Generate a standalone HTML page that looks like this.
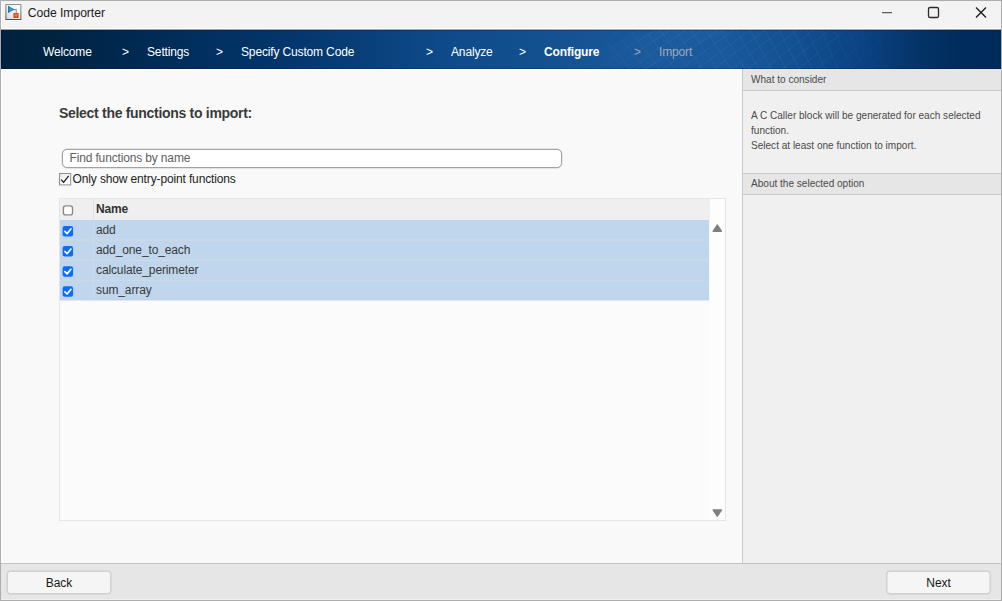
<!DOCTYPE html>
<html lang="en">
<head>
<meta charset="utf-8">
<title>Code Importer</title>
<style>
*{box-sizing:border-box;margin:0;padding:0}
html,body{width:1002px;height:601px;overflow:hidden;background:#fafafa}
body{font-family:"Liberation Sans",Arial,sans-serif;color:#333;position:relative}
body>*,.a{position:absolute}
.t{white-space:nowrap}
/* window frame */
#frame{left:0;top:0;width:1002px;height:601px;border:1px solid #adadad;pointer-events:none;z-index:9}
#title{left:1px;top:1px;width:1000px;height:28px;background:#f3f3f3;border-bottom:1px solid #fff;border-left:1px solid #fff}
#cap{left:27.7px;top:6px;font-size:12.2px;line-height:15px;color:#1b1b1b;letter-spacing:-0.05px}
#banner{left:1px;top:29px;width:1000px;height:40px;background:linear-gradient(90deg,#00223f 0%,#002340 5%,#00274b 10%,#012f5f 20%,#04376e 30%,#0f4b8a 45%,#145191 55%,#18589b 65%,#19599c 72%,#124f90 80%,#0a4080 87%,#043366 92%,#002c5c 96%,#002a5a 100%);overflow:hidden;box-shadow:inset 0 1px 0 rgba(255,255,255,.6),inset 0 2px 0 rgba(0,10,60,.28),inset 0 -1px 0 rgba(0,10,60,.25),inset 1px 0 0 rgba(0,0,30,.3)}
.nv{top:45px;font-size:12px;line-height:15px;color:#fff;letter-spacing:-0.15px}
.nv.b{font-weight:bold}
.nv.d{color:#a2a9b4}
#main{left:1px;top:69px;width:741px;height:495px;background:#f9f9f9;border-top:2px solid #fff;border-left:1px solid #fff}
#side{left:742px;top:69px;width:259px;height:495px;background:#f0f0f0;border-left:1px solid #c9c9c9}
.sh{left:743px;width:258px;background:#e6e6e6;border-bottom:1px solid #c9c9c9}
.st{font-size:10.05px;line-height:15px;color:#4a4a4a}
#foot{left:1px;top:563px;width:1000px;height:37px;background:#e6e6e6;border-top:1px solid #c2c2c2;border-bottom:1px solid #efefef}
.btn{top:571px;width:104px;height:23px;border:1px solid #d1d1d1;border-radius:3.5px;background:#f5f5f5;font-size:12px;line-height:22px;text-align:center;color:#161616;letter-spacing:-0.1px;box-shadow:0 0 0 0.7px #d4d4d4}
.row{left:60px;width:650px;height:20px;background:#c0d6ec;border-top:1px solid #d3e0ee}
.cbx{left:63px;width:10px;height:10px;border-radius:2.5px;background:#0d6efd}
.rt{left:96px;font-size:12px;line-height:15px;color:#3a3a3a;letter-spacing:-0.12px}
</style>
</head>
<body>
<div id="title"></div>
<svg style="left:0;top:0" width="28" height="26" viewBox="0 0 28 26">
  <defs>
    <linearGradient id="ig" x1="1" y1="0" x2="0" y2="1"><stop offset="0" stop-color="#ffffff"/><stop offset="0.5" stop-color="#f4f4f4"/><stop offset="1" stop-color="#d4d4d4"/></linearGradient>
    <linearGradient id="ib" x1="0" y1="0" x2="0" y2="1"><stop offset="0" stop-color="#8c8c8c"/><stop offset="1" stop-color="#4e4e4e"/></linearGradient>
    <radialGradient id="io" cx="0.5" cy="0.45" r="0.6"><stop offset="0" stop-color="#ff8a3c"/><stop offset="1" stop-color="#c8370a"/></radialGradient>
    <radialGradient id="it" cx="0.4" cy="0.5" r="0.6"><stop offset="0" stop-color="#3fa9dc"/><stop offset="1" stop-color="#135f9e"/></radialGradient>
  </defs>
  <rect x="4.9" y="3.5" width="17" height="17" rx="1" fill="#ffffff" opacity=".8"/>
  <rect x="5.9" y="4.5" width="15" height="15" fill="url(#ig)" stroke="url(#ib)" stroke-width="1"/>
  <path d="M13.5 9.5 H16.2 V13" fill="none" stroke="#8e8e8e" stroke-width="1.1"/>
  <path d="M8 5.8 L14.8 9.4 L8 13 Z" fill="url(#it)"/>
  <rect x="13.4" y="13" width="5.2" height="4.9" rx="0.6" fill="url(#io)"/>
</svg>
<div id="cap" class="t">Code Importer</div>
<svg style="left:871px;top:1px" width="130" height="28" viewBox="0 0 130 28">
  <path d="M11 11.7 H21" stroke="#3a3a3a" stroke-width="1" fill="none"/>
  <rect x="57.5" y="6.5" width="10" height="10" rx="1.6" fill="none" stroke="#2a2a2a" stroke-width="1.3"/>
  <path d="M105 6.5 L115 16.5 M115 6.5 L105 16.5" stroke="#1e1e1e" stroke-width="1.35" fill="none"/>
</svg>

<div id="banner"></div>
<svg id="mesh" style="left:1px;top:30px" width="1000" height="39" viewBox="0 0 1000 39">
  <defs><linearGradient id="mg" x1="0" y1="0" x2="1" y2="0"><stop offset="0.56" stop-color="#fff" stop-opacity="0"/><stop offset="0.66" stop-color="#fff" stop-opacity="1"/><stop offset="0.80" stop-color="#fff" stop-opacity="1"/><stop offset="0.91" stop-color="#fff" stop-opacity="0"/></linearGradient>
  <mask id="mm"><rect width="1000" height="39" fill="url(#mg)"/></mask></defs>
  <g mask="url(#mm)" fill="none" stroke="#9cc3ea" stroke-width="0.9" stroke-opacity="0.10">
    <path d="M596 0L630 39M612 0L645 39M628 0L659 39M644 0L674 39M659 0L688 39M674 0L702 39M690 0L716 39M705 0L730 39M720 0L744 39M735 0L758 39M749 0L771 39M764 0L785 39M778 0L798 39M792 0L811 39M806 0L824 39M820 0L837 39M834 0L850 39M848 0L862 39M861 0L875 39M875 0L887 39M888 0L900 39M901 0L912 39"/>
    <path d="M560 39L622 0M577 39L638 0M594 39L654 0M611 39L669 0M628 39L685 0M645 39L701 0M662 39L717 0M679 39L733 0M696 39L749 0M713 39L764 0M730 39L780 0M747 39L796 0M764 39L812 0M781 39L828 0M798 39L844 0M815 39L859 0M832 39L875 0M849 39L891 0M866 39L907 0"/>
    <path d="M530 39L660 0M538 39L665 0M546 39L669 0M554 39L674 0M562 39L679 0M570 39L683 0M578 39L688 0M586 39L693 0M594 39L697 0M602 39L702 0M610 39L707 0M618 39L711 0M626 39L716 0M634 39L721 0M642 39L725 0" stroke-width="0.7"/>
  </g>
</svg>
<div class="nv t" style="left:43px">Welcome</div>
<div class="nv t" style="left:122px">&gt;</div>
<div class="nv t" style="left:147px">Settings</div>
<div class="nv t" style="left:216px">&gt;</div>
<div class="nv t" style="left:241px">Specify Custom Code</div>
<div class="nv t" style="left:426px">&gt;</div>
<div class="nv t" style="left:451px">Analyze</div>
<div class="nv t" style="left:519px">&gt;</div>
<div class="nv b t" style="left:544px">Configure</div>
<div class="nv d t" style="left:634px">&gt;</div>
<div class="nv d t" style="left:659px">Import</div>

<div id="main"></div>
<div class="t" style="left:59px;top:105px;font-size:14px;font-weight:bold;line-height:16px;color:#3a3a3a;letter-spacing:-0.3px">Select the functions to import:</div>
<div class="t" style="left:62px;top:149px;width:500px;height:19px;border:1px solid #a2a2a2;border-radius:5px;background:#fff;box-shadow:0 0 0 0.4px rgba(150,150,150,.45);font-size:12px;line-height:17px;padding-left:6.5px;color:#606060;letter-spacing:-0.15px">Find functions by name</div>
<svg style="left:56px;top:170px" width="18" height="18" viewBox="56 170 18 18">
  <defs><linearGradient id="cg" x1="0" y1="0" x2="1" y2="1"><stop offset="0" stop-color="#e4e4e4"/><stop offset="0.6" stop-color="#fbfbfb"/><stop offset="1" stop-color="#ffffff"/></linearGradient></defs>
  <rect x="59.5" y="173.5" width="11.2" height="11.4" fill="url(#cg)" stroke="#8f8f8f" stroke-width="1"/>
  <path d="M61.2 179.7 L63.6 182.3 L68.7 175.8" fill="none" stroke="#151515" stroke-width="1.25"/>
</svg>
<div class="t" style="left:72.6px;top:172px;font-size:12px;line-height:15px;color:#222;letter-spacing:-0.14px">Only show entry-point functions</div>

<div style="left:59px;top:198px;width:667px;height:323px;border:1px solid #e5e5e5;background:#fbfbfb"></div>
<div style="left:710px;top:199px;width:15px;height:321px;background:#fdfdfd"></div>
<svg style="left:0;top:190px" width="742" height="340" viewBox="0 190 742 340">
  <rect x="60" y="198.9" width="650" height="20.9" fill="#efefef"/>
  <rect x="60" y="219.1" width="650" height="0.8" fill="#f6f6f6"/>
  <rect x="60" y="219.8" width="649.1" height="80.7" fill="#c0d6ec"/>
  <path d="M60 240H709.1M60 260.2H709.1M60 280.4H709.1" stroke="#cbd8e5" stroke-width="1.4" fill="none"/>
  <path d="M93.4 199V219.5" stroke="#dcdcdc" stroke-width="1" fill="none"/>
  <path d="M93.4 219.8V300.5" stroke="#cddbea" stroke-width="1" fill="none"/>
  <rect x="63.4" y="205.8" width="9.1" height="9.1" rx="2.2" fill="#fff" stroke="#888" stroke-width="1.35"/>
  <g transform="translate(62.6 225.9)"><rect width="10.5" height="10.5" rx="2.2" fill="#0b6dfd"/><path d="M2.3 5.5 L4.5 7.7 L8.3 3.1" fill="none" stroke="#fff" stroke-width="1.7" stroke-linecap="round" stroke-linejoin="round"/></g>
  <g transform="translate(62.6 246.0)"><rect width="10.5" height="10.5" rx="2.2" fill="#0b6dfd"/><path d="M2.3 5.5 L4.5 7.7 L8.3 3.1" fill="none" stroke="#fff" stroke-width="1.7" stroke-linecap="round" stroke-linejoin="round"/></g>
  <g transform="translate(62.6 266.2)"><rect width="10.5" height="10.5" rx="2.2" fill="#0b6dfd"/><path d="M2.3 5.5 L4.5 7.7 L8.3 3.1" fill="none" stroke="#fff" stroke-width="1.7" stroke-linecap="round" stroke-linejoin="round"/></g>
  <g transform="translate(62.6 286.3)"><rect width="10.5" height="10.5" rx="2.2" fill="#0b6dfd"/><path d="M2.3 5.5 L4.5 7.7 L8.3 3.1" fill="none" stroke="#fff" stroke-width="1.7" stroke-linecap="round" stroke-linejoin="round"/></g>
  <path d="M713.3 231.2 L717.3 225.2 L721.3 231.2 Z" fill="#808080" stroke="#808080" stroke-width="1.6" stroke-linejoin="round"/>
  <path d="M713.3 510 L717.3 516 L721.3 510 Z" fill="#808080" stroke="#808080" stroke-width="1.6" stroke-linejoin="round"/>
</svg>
<div class="t" style="left:96px;top:202px;font-size:12px;font-weight:bold;line-height:15px;color:#333;letter-spacing:-0.15px">Name</div>
<div class="rt t" style="top:223px">add</div>
<div class="rt t" style="top:243px">add_one_to_each</div>
<div class="rt t" style="top:263px">calculate_perimeter</div>
<div class="rt t" style="top:283px">sum_array</div>
<div id="side"></div>
<div class="sh" style="top:69px;height:22px"></div>
<div class="st t" style="left:751px;top:72px">What to consider</div>
<div class="st t" style="left:751px;top:108px">A C Caller block will be generated for each selected<br>function.<br>Select at least one function to import.</div>
<div class="sh" style="top:173px;height:22px;border-top:1px solid #c9c9c9"></div>
<div class="st t" style="left:751px;top:176px">About the selected option</div>

<div id="foot"></div>
<div class="btn" style="left:7px">Back</div>
<div class="btn" style="left:886px;transform:translateX(0.5px)">Next</div>
<div id="frame"></div>
</body>
</html>
